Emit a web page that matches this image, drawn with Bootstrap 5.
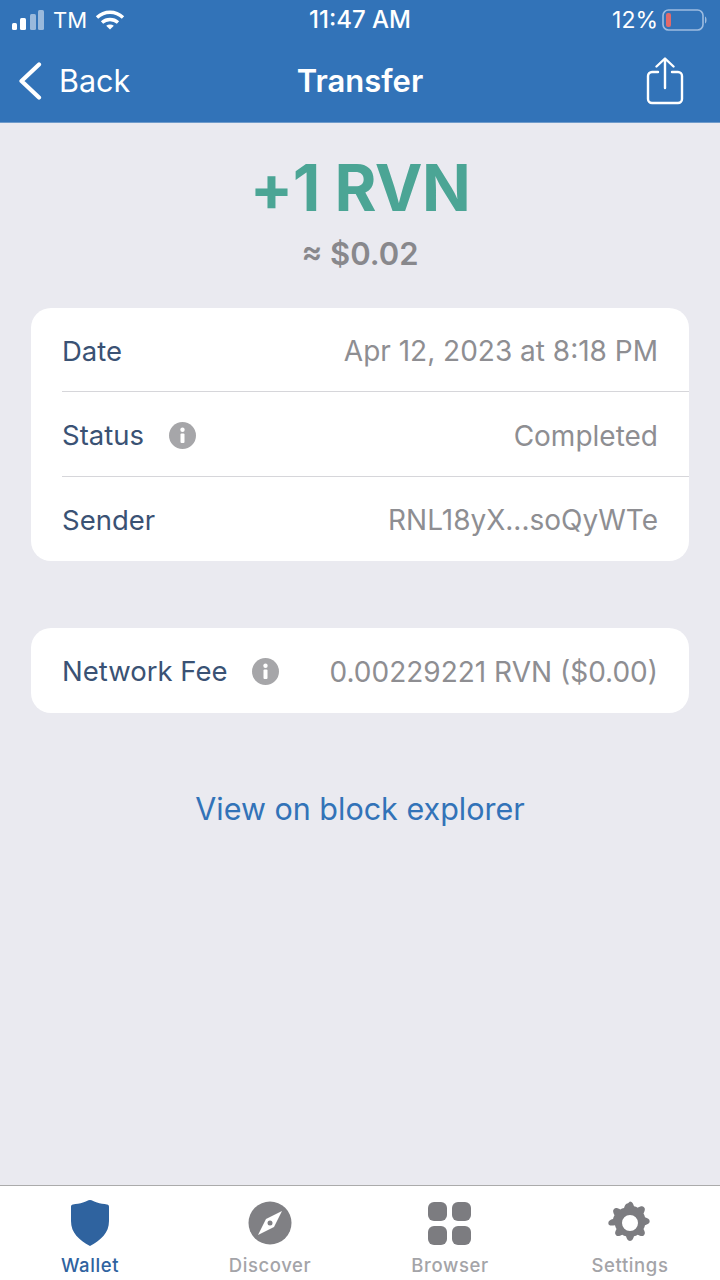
<!DOCTYPE html>
<html lang="en">
<head>
    <meta charset="UTF-8">
    <meta name="viewport" content="width=device-width, initial-scale=1.0">
    <title>Transfer</title>
    <link href="https://cdn.jsdelivr.net/npm/bootstrap@5.3.0/dist/css/bootstrap.min.css" rel="stylesheet">
    <style>
        html, body {
            height: 100%;
        }

        body {
            background-color: #EAEAF0;
            font-family: 'Inter', 'Liberation Sans', sans-serif;
        }

        .screen {
            height: 1280px;
        }

        .top-area {
            background-color: #3273B8;
            color: #fff;
            height: 123px;
            border-bottom: 1px solid #6F9BCB;
        }

        .status-strip {
            height: 40px;
            padding: 0 12px;
            font-size: 23px;
            line-height: 40px;
            position: relative;
        }

        .status-time {
            position: absolute;
            left: 0;
            right: 0;
            text-align: center;
            font-size: 24px;
            font-weight: 500;
        }

        .carrier {
            margin-left: 9px;
            font-size: 22px;
        }

        .title-strip {
            height: 82px;
            padding: 0 36px 0 18px;
            position: relative;
        }

        .back-text {
            font-size: 30.5px;
            margin-left: 17px;
        }

        .title-text {
            position: absolute;
            left: 0;
            right: 0;
            text-align: center;
            font-size: 31px;
            font-weight: 600;
        }

        .hero {
            padding-top: 25px;
            height: 185px;
        }

        .hero-amount {
            color: #4BA595;
            font-size: 64px;
            line-height: 80px;
            font-weight: 700;
            letter-spacing: -.5px;
        }

        .hero-fiat {
            color: #88888C;
            font-size: 31px;
            line-height: 46px;
            margin-top: 3px;
            font-weight: 600;
        }

        .info-card {
            margin: 0 31px;
            border: 0;
            border-radius: 20px;
            overflow: hidden;
        }

        .info-card + .info-card {
            margin-top: 67px;
        }

        .info-row {
            height: 84.4px;
            margin-left: 31px;
            padding: 3px 31px 0 0;
            border-bottom: 1.5px solid #D6D6DA;
            font-size: 27.5px;
        }

        .info-row:last-child {
            border-bottom: 0;
        }

        .info-label {
            color: #3A5274;
        }

        .info-value {
            color: #8E8E92;
            font-size: 28px;
        }

        .info-dot {
            width: 27px;
            height: 27px;
            margin-left: 25px;
        }

        .explorer-link {
            color: #3273B8;
            font-size: 30.5px;
            text-decoration: none;
            margin-top: 73px;
        }

        .tab-strip {
            height: 95px;
            background-color: #fff;
            border-top: 1.5px solid #ABABAB;
        }

        .tab-entry {
            width: 180px;
            padding-top: 14px;
            color: #A4A4A8;
            font-size: 18.5px;
            font-weight: 500;
            text-decoration: none;
            letter-spacing: .6px;
        }

        .tab-entry.is-on {
            color: #2F639F;
        }

        .tab-entry svg {
            display: block;
            height: 46px;
            margin-bottom: 6px;
        }
    </style>
</head>

<body>
    <div class="screen d-flex flex-column">
        <header class="top-area">
            <div class="status-strip d-flex align-items-center">
                <span class="status-time">11:47 AM</span>
                <svg width="32" height="20" viewBox="0 0 32 20" fill="#fff">
                    <rect x="0" y="13" width="5" height="7" rx="1.500"/>
                    <rect x="8" y="8" width="6" height="12" rx="1.500"/>
                    <rect x="18" y="4" width="6" height="16" rx="1.500" opacity=".5"/>
                    <rect x="26" y="0" width="6" height="20" rx="1.500" opacity=".5"/>
                </svg>
                <span class="carrier">TM</span>
                <svg class="ms-2" width="30" height="22" viewBox="0 0 30 22" fill="none" stroke="#fff" stroke-width="3.400">
                    <path d="M2 8.500C9.500 1.500 20.500 1.500 28 8.500"/>
                    <path d="M7 13.500C11.500 9.500 18.500 9.500 23 13.500"/>
                    <path d="M15 20.500l-3.800-3.700c2.200-1.700 5.400-1.700 7.600 0z" fill="#fff" stroke="none"/>
                </svg>
                <span class="ms-auto">12%</span>
                <svg class="ms-1" width="46" height="24" viewBox="0 0 46 24" fill="none">
                    <rect x="1" y="2" width="40" height="20" rx="5.500" stroke="#9DBCE0" stroke-width="1.600"/>
                    <rect x="4" y="5" width="5" height="14" rx="2" fill="#E36A6A"/>
                    <path d="M43 8.500c2 .5 2 6.500 0 7z" fill="#9DBCE0"/>
                </svg>
            </div>
            <nav class="title-strip d-flex align-items-center justify-content-between">
                <span class="title-text">Transfer</span>
                <a class="d-flex align-items-center text-white text-decoration-none" href="#">
                    <svg width="24" height="38" viewBox="0 0 24 38" fill="none" stroke="#fff" stroke-width="4.200" stroke-linecap="round" stroke-linejoin="round">
                        <path d="M21 2.500L3.500 19L21 35.500"/>
                    </svg>
                    <span class="back-text">Back</span>
                </a>
                <svg width="38" height="48" viewBox="0 0 38 48" fill="none" stroke="#fff" stroke-width="2.400" stroke-linecap="round" stroke-linejoin="round">
                    <path d="M12 15H6a4 4 0 0 0-4 4v23a4 4 0 0 0 4 4h26a4 4 0 0 0 4-4V19a4 4 0 0 0-4-4h-6"/>
                    <path d="M19 31V2M10.500 9.500L19 1.500l8.500 8"/>
                </svg>
            </nav>
        </header>

        <main class="flex-grow-1 d-flex flex-column">
            <section class="hero text-center">
                <div class="hero-amount">+1 RVN</div>
                <div class="hero-fiat">≈ $0.02</div>
            </section>

            <div class="card info-card">
                <div class="info-row d-flex align-items-center justify-content-between">
                    <span class="info-label">Date</span>
                    <span class="info-value">Apr 12, 2023 at 8:18 PM</span>
                </div>
                <div class="info-row d-flex align-items-center justify-content-between">
                    <span class="d-flex align-items-center">
                        <span class="info-label">Status</span>
                        <svg class="info-dot" viewBox="0 0 27 27"><circle cx="13.500" cy="13.500" r="13.500" fill="#A6A6A9"/><rect x="11.500" y="11.500" width="4" height="9.500" rx="1" fill="#fff"/><circle cx="13.500" cy="7.800" r="2.200" fill="#fff"/></svg>
                    </span>
                    <span class="info-value">Completed</span>
                </div>
                <div class="info-row d-flex align-items-center justify-content-between">
                    <span class="info-label">Sender</span>
                    <span class="info-value">RNL18yX...soQyWTe</span>
                </div>
            </div>

            <div class="card info-card">
                <div class="info-row d-flex align-items-center justify-content-between">
                    <span class="d-flex align-items-center">
                        <span class="info-label">Network Fee</span>
                        <svg class="info-dot" viewBox="0 0 27 27"><circle cx="13.500" cy="13.500" r="13.500" fill="#A6A6A9"/><rect x="11.500" y="11.500" width="4" height="9.500" rx="1" fill="#fff"/><circle cx="13.500" cy="7.800" r="2.200" fill="#fff"/></svg>
                    </span>
                    <span class="info-value">0.00229221 RVN ($0.00)</span>
                </div>
            </div>

            <a class="explorer-link text-center" href="#">View on block explorer</a>
        </main>

        <footer class="tab-strip d-flex">
            <a class="tab-entry is-on d-flex flex-column align-items-center" href="#">
                <svg width="40" height="46" viewBox="0 0 40 46"><path d="M20 0c2 0 4 1.500 7 2.500 3 1 7 1.500 10 2 1.500.3 2 1 2 2.500v14c0 12-8 19-19 25C9 40 1 33 1 21V7c0-1.500.5-2.200 2-2.500 3-.5 7-1 10-2S18 0 20 0z" fill="#2F639F"/></svg>
                Wallet
            </a>
            <a class="tab-entry d-flex flex-column align-items-center" href="#">
                <svg width="44" height="46" viewBox="0 0 44 46"><circle cx="22" cy="23" r="21.500" fill="#808084"/><path d="M34 11L26 27 10 35l8-16z" fill="#fff"/><circle cx="22" cy="23" r="2.500" fill="#808084"/></svg>
                Discover
            </a>
            <a class="tab-entry d-flex flex-column align-items-center" href="#">
                <svg width="44" height="46" viewBox="0 0 44 46" fill="#7C7C80">
                    <rect x="0" y="2" width="19" height="19" rx="6"/>
                    <rect x="24" y="2" width="19" height="19" rx="6"/>
                    <rect x="0" y="26" width="19" height="19" rx="6"/>
                    <rect x="24" y="26" width="19" height="19" rx="6"/>
                </svg>
                Browser
            </a>
            <a class="tab-entry d-flex flex-column align-items-center" href="#">
                <svg width="44" height="46" viewBox="0 0 44 46">
                    <path fill="#7C7C80" fill-rule="evenodd" d="M22 1.500c2.400 0 3.200 2.200 4 4.700 1.400.3 2.600.8 3.800 1.500 2.400-1.200 4.500-2.200 6.200-.5s.7 3.800-.5 6.200c.7 1.200 1.200 2.400 1.500 3.800 2.500.8 4.700 1.600 4.700 4s-2.200 3.200-4.700 4c-.3 1.400-.8 2.600-1.500 3.800 1.200 2.400 2.200 4.500.5 6.200s-3.800.7-6.200-.5c-1.200.7-2.400 1.200-3.800 1.500-.8 2.500-1.600 4.700-4 4.700s-3.200-2.200-4-4.700c-1.400-.3-2.600-.8-3.800-1.500-2.400 1.200-4.500 2.200-6.200.5s-.7-3.800.5-6.200c-.7-1.200-1.200-2.400-1.500-3.800C2.500 26.200.3 25.400.3 23s2.200-3.200 4.700-4c.3-1.400.8-2.600 1.500-3.800-1.200-2.400-2.200-4.500-.5-6.200s3.800-.7 6.200.5c1.200-.7 2.400-1.200 3.800-1.500.8-2.500 1.600-4.700 4-4.700zM22 15a8 8 0 1 0 0 16 8 8 0 0 0 0-16z"/>
                </svg>
                Settings
            </a>
        </footer>
    </div>
    <script src="https://cdn.jsdelivr.net/npm/bootstrap@5.3.0/dist/js/bootstrap.bundle.min.js"></script>
</body>
</html>
